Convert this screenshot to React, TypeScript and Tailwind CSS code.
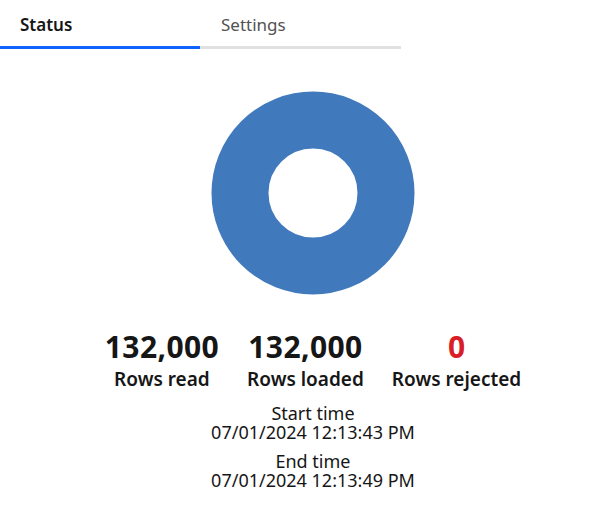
import React from "react";

export default function App() {
  return (
    <div className="w-[602px] h-[506px] bg-white text-[#161616]" style={{ fontFamily: '"Noto Sans", "Open Sans", sans-serif' }}>
      <div className="flex">
        <div className="w-[200px] h-[49px] border-b-[3px] border-[#0f62fe] pl-5 pt-[14px] text-[17px] font-semibold leading-[22px]">Status</div>
        <div className="w-[201px] h-[49px] border-b-[3px] border-[#e0e0e0] pl-[21px] pt-[14px] text-[17px] text-[#525252] leading-[22px]">Settings</div>
      </div>
      <div className="pl-6 flex flex-col items-center">
        <svg width="204" height="204" viewBox="0 0 204 204" className="mt-[42px]">
          <circle cx="102" cy="102" r="73" fill="none" stroke="#4179bd" strokeWidth="57" />
        </svg>
        <div className="flex gap-[28px] mt-[34px] text-center">
          <div className="flex flex-col items-center">
            <div className="text-[30px] font-bold leading-[36px] tracking-[0.4px]">132,000</div>
            <div className="text-[19px] font-semibold leading-[24px] mt-[2px]">Rows read</div>
          </div>
          <div className="flex flex-col items-center">
            <div className="text-[30px] font-bold leading-[36px] tracking-[0.4px]">132,000</div>
            <div className="text-[19px] font-semibold leading-[24px] mt-[2px]">Rows loaded</div>
          </div>
          <div className="flex flex-col items-center">
            <div className="text-[30px] font-bold leading-[36px] text-[#da1e28]">0</div>
            <div className="text-[19px] font-semibold leading-[24px] mt-[2px]">Rows rejected</div>
          </div>
        </div>
        <div className="mt-[13px] text-center text-[18px] leading-[19px]">
          <div>Start time</div>
          <div>07/01/2024 12:13:43 PM</div>
          <div className="mt-[10px]">End time</div>
          <div>07/01/2024 12:13:49 PM</div>
        </div>
      </div>
    </div>
  );
}
